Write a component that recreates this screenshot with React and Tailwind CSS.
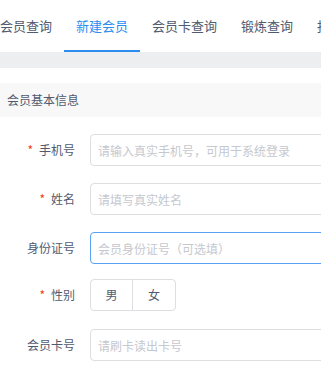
import React from "react";

const tabs = ["会员查询", "新建会员", "会员卡查询", "锻炼查询", "报表统计"];

const Field = ({ label, required, placeholder, focused, className }) => (
  <div className={`flex items-center ${className}`}>
    <label className="w-[90px] shrink-0 pr-[15px] text-right text-[12px] text-[#515a6e]">
      {required && <span className="mr-[6px] text-[#ed4014]">*</span>}
      {label}
    </label>
    <input
      className={`h-8 w-[300px] shrink-0 rounded-[4px] border px-[7px] text-[12px] outline-none placeholder:text-[#c5c8ce] ${
        focused ? "border-[#57a3f3]" : "border-[#dcdee2]"
      }`}
      placeholder={placeholder}
    />
  </div>
);

export default function App() {
  return (
    <div
      className="w-[321px] h-[373px] overflow-hidden bg-white"
      style={{ fontFamily: '"Noto Sans CJK SC", "Noto Sans", sans-serif' }}
    >
      {/* Tabs */}
      <div className="flex h-[52px] -ml-[12px] whitespace-nowrap">
        {tabs.map((t, i) => (
          <div
            key={t}
            className={`flex h-[52px] shrink-0 items-center border-b-2 px-[12px] pt-[2px] text-[13px] ${
              i === 1
                ? "border-[#2d8cf0] text-[#2d8cf0]"
                : "border-transparent text-[#515a6e]"
            }`}
          >
            {t}
          </div>
        ))}
      </div>
      <div className="h-[16px] bg-[#edeeef]"></div>

      {/* Section header */}
      <div className="mt-[15px] flex h-[34px] items-center bg-[#f8f8f9] px-[7px] text-[12px] text-[#515a6e]">
        会员基本信息
      </div>

      {/* Form */}
      <div className="pt-[17px]">
        <Field label="手机号" required placeholder="请输入真实手机号，可用于系统登录" />
        <Field label="姓名" required placeholder="请填写真实姓名" className="mt-[17px]" />
        <Field label="身份证号" placeholder="会员身份证号（可选填）" focused className="mt-[17px]" />
        <div className="mt-[15px] flex items-center">
          <label className="w-[90px] shrink-0 pr-[15px] text-right text-[12px] text-[#515a6e]">
            <span className="mr-[6px] text-[#ed4014]">*</span>
            性别
          </label>
          <div className="flex h-8 text-[12px] text-[#515a6e]">
            <div className="flex w-[43px] items-center justify-center rounded-l-[4px] border border-[#dcdee2]">
              男
            </div>
            <div className="-ml-px flex w-[44px] items-center justify-center rounded-r-[4px] border border-[#dcdee2]">
              女
            </div>
          </div>
        </div>
        <Field label="会员卡号" placeholder="请刷卡读出卡号" className="mt-[18px]" />
      </div>
    </div>
  );
}
